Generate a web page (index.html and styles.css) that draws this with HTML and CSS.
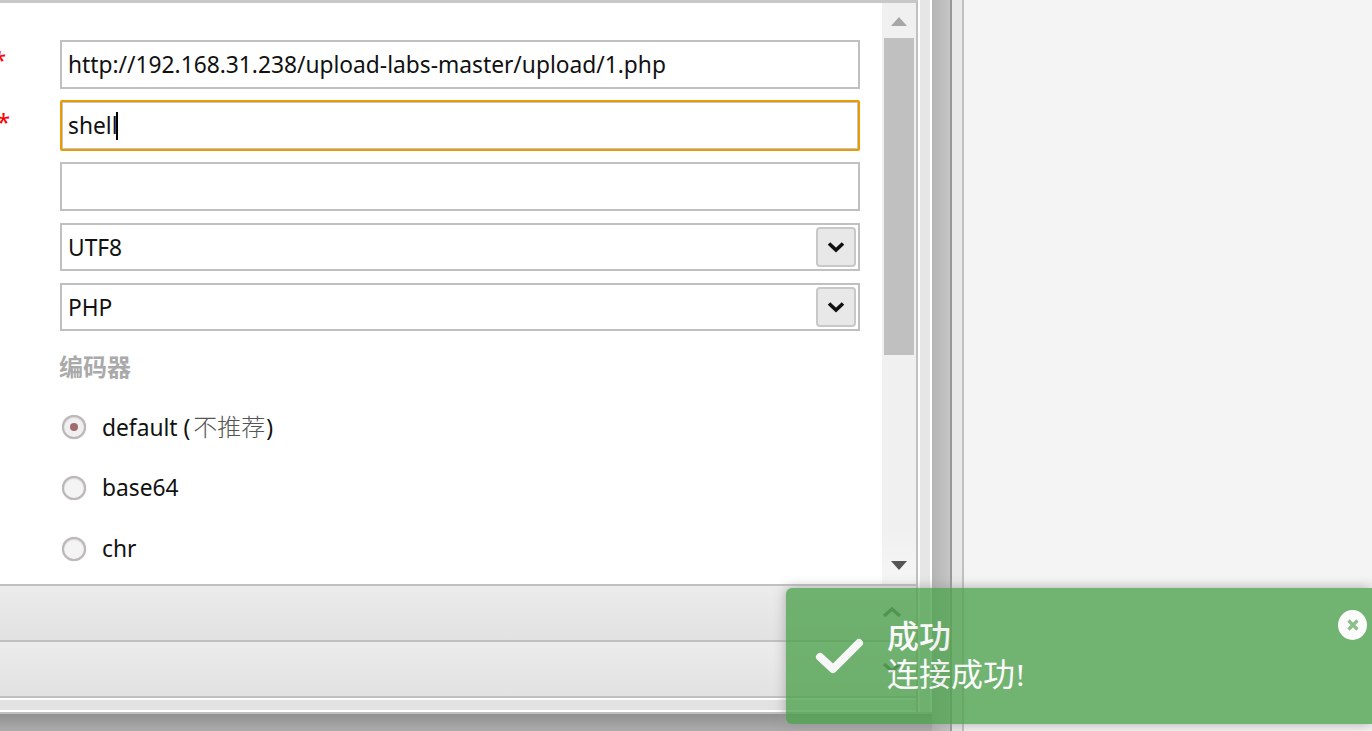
FILE: index.html
```html
<!DOCTYPE html>
<html lang="zh">
<head>
<meta charset="utf-8">
<title>连接成功</title>
<link rel="stylesheet" href="styles.css">
</head>
<body>
<div class="desk">
  <div class="win">
    <div class="win-body">
      <div class="main">
        <div class="content">
          <div class="form">
            <div class="row row-url">
              <span class="req req-clipped">*</span>
              <div class="field">http://192.168.31.238/upload-labs-master/upload/1.php</div>
            </div>
            <div class="row row-pass">
              <span class="req">*</span>
              <div class="field field-focus">shell<span class="caret"></span></div>
            </div>
            <div class="row row-plain">
              <div class="field"></div>
            </div>
            <div class="row row-select">
              <div class="field field-select">UTF8
                <span class="drop"><svg width="20" height="14" viewBox="0 0 20 14"><path d="M3 3.5 L10 10 L17 3.5" fill="none" stroke="#111" stroke-width="3.6"/></svg></span>
              </div>
            </div>
            <div class="row row-last">
              <div class="field field-select">PHP
                <span class="drop"><svg width="20" height="14" viewBox="0 0 20 14"><path d="M3 3.5 L10 10 L17 3.5" fill="none" stroke="#111" stroke-width="3.6"/></svg></span>
              </div>
            </div>
            <div class="heading">编码器</div>
            <div class="radio"><span class="dot dot-on"></span><span>default (<span class="muted">不推荐</span>)</span></div>
            <div class="radio"><span class="dot"></span><span>base64</span></div>
            <div class="radio"><span class="dot"></span><span>chr</span></div>
          </div>
          <div class="scroll">
            <div class="arrow-box"><svg width="18" height="10" viewBox="0 0 18 10"><path d="M9 0 L17 9 H1 Z" fill="#a6a6a6"/></svg></div>
            <div class="thumb"></div>
            <div class="arrow-box arrow-end"><svg width="18" height="10" viewBox="0 0 18 10"><path d="M1 0 H17 L9 9 Z" fill="#555"/></svg></div>
          </div>
        </div>
        <div class="bar bar-first">
          <svg class="chev" width="20" height="12" viewBox="0 0 20 12"><path d="M2 10 L10 3 L18 10" fill="none" stroke="#555" stroke-width="3.4"/></svg>
        </div>
        <div class="bar">
          <svg class="chev" width="20" height="12" viewBox="0 0 20 12"><path d="M2 2 L10 9 L18 2" fill="none" stroke="#555" stroke-width="3.4"/></svg>
        </div>
        <div class="status"></div>
      </div>
      <div class="strip"></div>
    </div>
  </div>
  <div class="splitter"></div>
  <div class="right-pad"></div>
  <div class="right"></div>
</div>
<div class="toast">
  <svg class="toast-icon" width="52" height="44" viewBox="0 0 52 44"><path d="M6 23 L19 35 L45 9" fill="none" stroke="#fbfbfb" stroke-width="8" stroke-linecap="round" stroke-linejoin="round"/></svg>
  <div class="toast-text">
    <div class="toast-title">成功</div>
    <div class="toast-msg">连接成功!</div>
  </div>
  <span class="toast-close"><svg width="14" height="14" viewBox="0 0 14 14"><path d="M2.5 2.5 L11.5 11.5 M11.5 2.5 L2.5 11.5" stroke="#70b26f" stroke-width="3.2" fill="none"/></svg></span>
</div>
</body>
</html>
```
FILE: styles.css
```css
* { box-sizing: border-box; }
html, body { margin: 0; height: 100%; overflow: hidden; }
body {
  position: relative;
  width: 1372px;
  height: 731px;
  background: #f4f4f4;
  font-family: "Noto Sans", "Noto Sans CJK SC", sans-serif;
  color: #111;
}
.desk { display: flex; height: 731px; }

.win {
  width: 932px;
  flex: none;
  background: linear-gradient(#919191 714px, #ababab);
}
.win-body {
  display: flex;
  height: 714px;
  background: #fff;
  border-bottom: 2px solid #c0c0c0;
}
.main {
  width: 918px;
  flex: none;
  display: flex;
  flex-direction: column;
  border-right: 2px solid #c0c0c0;
  border-top: 3px solid #c8c8c8;
}
.strip {
  flex: 1;
  border-left: 2px solid #fff;
  border-right: 2px solid #fff;
  background: #e6e6e6;
}

.content { display: flex; height: 583px; flex: none; border-bottom: 2px solid #c0c0c0; }
.form { flex: 1; padding-top: 37px; overflow: hidden; }
.row { position: relative; padding-left: 60px; width: 860px; }
.row-url { height: 60px; }
.row-pass { height: 62px; }
.row-plain { height: 61px; }
.row-select { height: 60px; }
.row-last { height: 60px; }
.req {
  position: absolute;
  left: -3px;
  top: 5px;
  width: 13px;
  height: 30px;
  overflow: hidden;
  color: #f00;
  font-size: 24px;
  line-height: 34px;
}
.req-clipped { left: -7px; top: 3px; }

.field {
  position: relative;
  display: flex;
  align-items: center;
  width: 800px;
  height: 49px;
  padding: 1px 6px 0;
  border: 2px solid #c0c0c0;
  background: #fff;
  font-size: 22.75px;
  line-height: 1;
  white-space: nowrap;
}
.field-select { padding-top: 3px; }
.row-pass .field { height: 51px; }
.row-select .field, .row-last .field { height: 48px; }
.field-focus {
  border-color: #e89c00;
  border-radius: 2px;
  box-shadow: inset 0 0 0 1px #c4c4c4;
}
.caret {
  display: inline-block;
  width: 2px;
  height: 28px;
  margin-left: -2px;
  background: #000;
}
.drop {
  position: absolute;
  right: 2px;
  top: 2px;
  width: 40px;
  height: 40px;
  display: flex;
  align-items: center;
  justify-content: center;
  background: #e8e8e8;
  border: 2px solid #c8c8c8;
  border-radius: 4px;
}

.heading {
  margin: -3px 0 0 59px;
  height: 56px;
  padding-top: 11px;
  color: #aaa;
  font-weight: 700;
  font-size: 24px;
  line-height: 30px;
  font-family: "Noto Sans CJK SC", sans-serif;
}
.radio {
  display: flex;
  align-items: center;
  gap: 16px;
  height: 61px;
  padding: 1px 0 0 62px;
  font-size: 22.75px;
  line-height: 30px;
  font-weight: 400;
}
.muted { color: #555; font-size: 24px; font-weight: 300; margin: 0 1px 0 3px; }
.dot {
  position: relative;
  display: block;
  width: 24px;
  height: 24px;
  border-radius: 50%;
  border: 2px solid #bdb8b8;
  background: #f4f4f4;
  box-shadow: 0 0 1px #bdb8b8, inset 0 1px 1px #ddd;
}
.dot-on { background: #f0f0f0; }
.dot-on::after {
  content: "";
  position: absolute;
  left: 6px;
  top: 6px;
  width: 8px;
  height: 8px;
  border-radius: 50%;
  background: #a06a70;
}

.scroll {
  width: 34px;
  flex: none;
  display: flex;
  flex-direction: column;
  align-items: center;
  background: linear-gradient(#f0f0f0, #f0f0f0 90%, #f6f6f6);
}
.arrow-box {
  height: 35px;
  width: 100%;
  display: flex;
  align-items: center;
  justify-content: center;
  padding-top: 3px;
}
.arrow-end { margin-top: auto; padding-top: 0; height: 37px; }
.thumb { width: 30px; height: 317px; background: #c0c0c0; }

.bar {
  position: relative;
  flex: none;
  height: 56px;
  background: linear-gradient(#ececec, #e2e2e2);
  border-bottom: 2px solid #c0c0c0;
}
.chev { position: absolute; right: 14px; top: 20px; }
.status {
  flex: 1;
  border-top: 2px solid #fff;
  background: #e2e2e2;
  border-bottom: 2px solid #fff;
}

.splitter {
  width: 20px;
  flex: none;
  background: linear-gradient(90deg, #b4b4b4, #c6c6c6);
  border-right: 2px solid #999;
}
.right-pad {
  width: 10px;
  flex: none;
  background: #e9e9e9;
}
.right {
  flex: 1;
  border-left: 2px solid #c0c0c0;
}

.toast {
  position: absolute;
  left: 786px;
  top: 588px;
  width: 586px;
  height: 136px;
  display: flex;
  align-items: center;
  padding: 0 0 0 101px;
  background: #51a351;
  box-shadow: 0 0 12px #999;
  opacity: .8;
  border-radius: 6px 0 0 6px;
  color: #fff;
  font-family: "Liberation Serif", "Noto Sans CJK SC", serif;
}
.toast-icon { position: absolute; left: 28px; top: 46px; }
.toast-text { font-size: 32px; line-height: 38px; font-weight: 400; }
.toast-title { font-weight: 500; }
.toast-close {
  position: absolute;
  right: 5px;
  top: 22px;
  width: 29px;
  height: 30px;
  display: flex;
  align-items: center;
  justify-content: center;
  border-radius: 50%;
  background: #fff;
}
```
